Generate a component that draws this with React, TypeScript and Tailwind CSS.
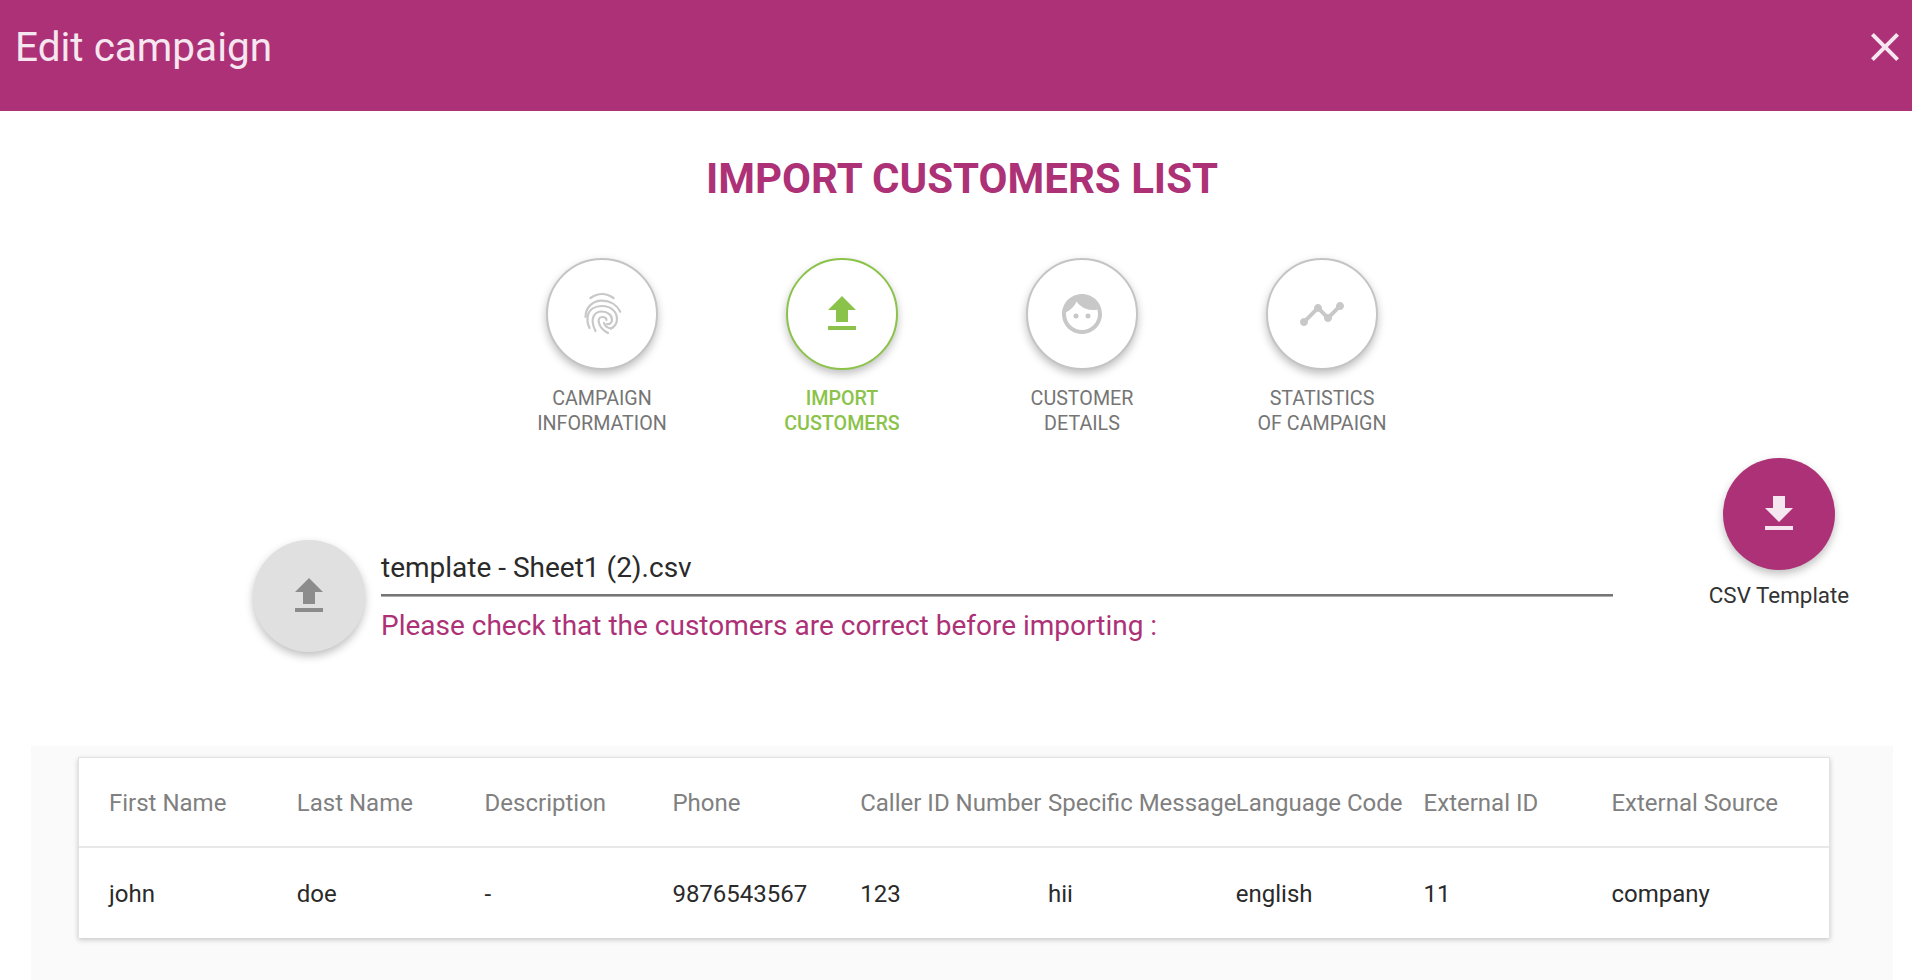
import React from "react";
import { MdClose, MdFace, MdFileDownload, MdFileUpload, MdTimeline } from "react-icons/md";

function FingerprintIcon({ size = 48 }: { size?: number }) {
  return (
    <svg width={size} height={size} viewBox="0 0 48 48" fill="none" stroke="currentColor" strokeWidth="2.2" strokeLinecap="round">
      <path d="M12.5 8 Q24 0 35.5 8" />
      <path d="M7.5 27 C7.5 17 15 10.7 24 10.7 C32 10.7 39 15 42.3 21.7" />
      <path d="M11.5 38 C9 33 9 29 10 25 C11.5 19.5 17 16 24 16 C32 16 39 21 39 29 C39 33 37 36.5 33 38.5" />
      <path d="M17.5 41 C14.5 35 14 30 15.5 26.5 C17 23 20 21.5 24 21.5 C29.5 21.5 34 25 34 30 C34 33 31.5 34.5 29 34" />
      <path d="M28.5 30 C28.5 28 26.5 27 24 27 C21 27 20 30 21 33 C22 37 25 40.5 30 43" />
      <path d="M26 33 C27 36 30 38 33 38.5" />
    </svg>
  );
}

const steps = [
  { icon: FingerprintIcon, lines: ["CAMPAIGN", "INFORMATION"], active: false },
  { icon: MdFileUpload, lines: ["IMPORT", "CUSTOMERS"], active: true },
  { icon: MdFace, lines: ["CUSTOMER", "DETAILS"], active: false },
  { icon: MdTimeline, lines: ["STATISTICS", "OF CAMPAIGN"], active: false },
];

const headers = ["First Name", "Last Name", "Description", "Phone", "Caller ID Number", "Specific Message", "Language Code", "External ID", "External Source"];
const row = ["john", "doe", "-", "9876543567", "123", "hii", "english", "11", "company"];

export default function App() {
  return (
    <div className="h-[980px] w-[1912px] overflow-hidden bg-white font-['Roboto',sans-serif] text-[#2a2a2a]">
      <header className="flex h-[111px] items-start justify-between bg-[#ad3176] pl-[15px] pr-[3px] pt-[23px] text-[#f6e6f0]">
        <h1 className="text-[40.5px] leading-[49px]">Edit campaign</h1>
        <MdClose size={48} />
      </header>

      <h2 className="mt-[42px] pl-[12px] text-center text-[42px] font-bold leading-[52px] text-[#ad3176]">IMPORT CUSTOMERS LIST</h2>

      <div className="mt-[53px] flex justify-center pl-[12px]">
        {steps.map((s) => {
          const Icon = s.icon;
          return (
            <div key={s.lines[0]} className="flex w-[240px] flex-col items-center">
              <div
                className={`flex h-[112px] w-[112px] items-center justify-center rounded-full border-2 bg-white shadow-[0_4px_8px_rgba(0,0,0,0.25)] ${
                  s.active ? "border-[#8bc34a] text-[#8bc34a]" : "border-[#c4c4c4] text-[#c8c8c8]"
                }`}
              >
                <Icon size={48} />
              </div>
              <div className={`mt-[16px] text-center text-[19.7px] leading-[25px] ${s.active ? "font-medium text-[#8bc34a]" : "text-[#757575]"}`}>
                <div>{s.lines[0]}</div>
                <div>{s.lines[1]}</div>
              </div>
            </div>
          );
        })}
      </div>

      <div className="mt-[22px] flex h-[288px] items-start pl-[253px]">
        <div className="mt-[82px] flex h-[112px] w-[112px] shrink-0 items-center justify-center rounded-full bg-[#e0e0e0] text-[#8c8c8c] shadow-[0_4px_8px_rgba(0,0,0,0.25)]">
          <MdFileUpload size={48} />
        </div>
        <div className="ml-[16px] w-[1232px] shrink-0 pt-[93px]">
          <div className="border-b-2 border-[#757575] pb-[10px] text-[28px] leading-[33px] shadow-[0_1px_0_#b0b0b0]">template - Sheet1 (2).csv</div>
          <div className="mt-[13px] text-[28px] leading-[33px] text-[#ad3176]">Please check that the customers are correct before importing :</div>
        </div>
        <div className="ml-[110px] flex w-[112px] shrink-0 flex-col items-center">
          <div className="flex h-[112px] w-[112px] items-center justify-center rounded-full bg-[#ad3176] text-[#f6e6f0] shadow-[0_4px_8px_rgba(0,0,0,0.25)]">
            <MdFileDownload size={48} />
          </div>
          <div className="mt-[12px] whitespace-nowrap text-[22.4px] leading-[26px] text-[#333333]">CSV Template</div>
        </div>
      </div>

      <div className="ml-[31px] mr-[19px] bg-[#fafafa] pb-[42px] pl-[47px] pr-[63px] pt-[11px]">
        <div className="border-x border-t border-[#e2e2e2] bg-white text-[24px] shadow-[0_2px_5px_rgba(0,0,0,0.2)]">
          <div className="grid h-[90px] grid-cols-[repeat(9,187.8px)] items-center border-b-2 border-[#e8e8e8] pl-[30px] pt-[1px] text-[#808080]">
            {headers.map((h) => (
              <div key={h} className="whitespace-nowrap">{h}</div>
            ))}
          </div>
          <div className="grid h-[90px] grid-cols-[repeat(9,187.8px)] items-center pl-[30px] pt-[2px]">
            {row.map((c) => (
              <div key={c} className="whitespace-nowrap">{c}</div>
            ))}
          </div>
        </div>
      </div>
    </div>
  );
}
